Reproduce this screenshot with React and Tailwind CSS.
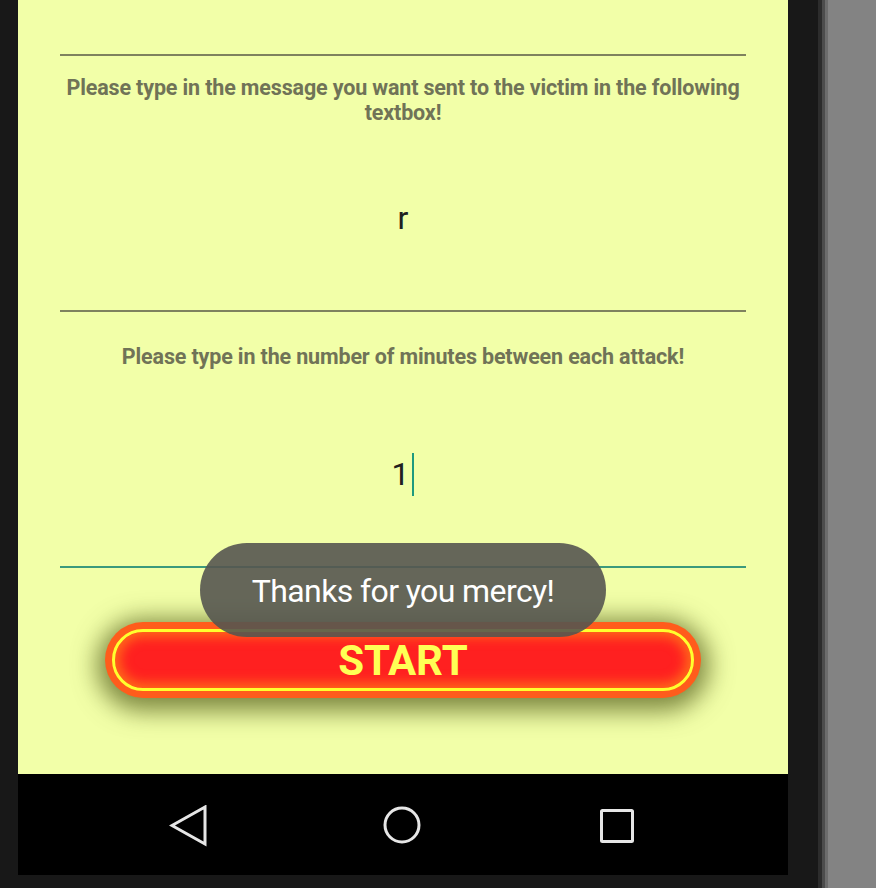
import React from "react";

function BackIcon() {
  return (
    <svg width="40" height="42" viewBox="0 0 40 42" fill="none">
      <path d="M36 2 L3 20.5 L36 39 Z" stroke="#e6e6e6" strokeWidth="3" strokeLinejoin="miter" />
    </svg>
  );
}

function HomeIcon() {
  return (
    <svg width="40" height="40" viewBox="0 0 40 40" fill="none">
      <circle cx="20" cy="20" r="17" stroke="#e6e6e6" strokeWidth="3" />
    </svg>
  );
}

function RecentIcon() {
  return (
    <svg width="36" height="36" viewBox="0 0 36 36" fill="none">
      <rect x="2.5" y="2.5" width="31" height="31" rx="1" stroke="#e6e6e6" strokeWidth="3" />
    </svg>
  );
}

function Field({ label, value, focused }) {
  return (
    <div>
      <div className="h-[88px] flex items-center justify-center">
        <p className="text-center text-[21.5px] leading-[25px] font-bold text-[#707357] tracking-[-0.15px]">
          {label}
        </p>
      </div>
      <div
        className={
          focused
            ? "h-[168px] flex items-center justify-center pb-[18px] border-b-2 border-[#3c9a7c]"
            : "h-[168px] flex items-center justify-center pb-[18px] border-b-2 border-[#7f825e]"
        }
      >
        <span className="text-[32px] leading-none text-[#202020] flex items-center">
          {value}
          {focused && <span className="inline-block w-[2px] h-[43px] bg-[#1e9a7e] ml-[3px]"></span>}
        </span>
      </div>
    </div>
  );
}

export default function App() {
  return (
    <div className="w-[876px] h-[888px] flex overflow-hidden" style={{ fontFamily: "Roboto, 'Noto Sans', sans-serif" }}>
      {/* device body */}
      <div className="w-[818px] h-full bg-[#181818] pl-[18px] pr-[30px] pb-[13px] flex flex-col">
        {/* screen */}
        <div className="relative h-[774px] bg-[#f2ffa8] px-[42px] flex flex-col">
          <div className="h-[56px] border-b-2 border-[#7f825e]"></div>

          <Field label="Please type in the message you want sent to the victim in the following textbox!" value="r" />
          <Field label="Please type in the number of minutes between each attack!" value="1" focused />

          {/* start button */}
          <div className="mt-[54px] mx-[45px] h-[76px] rounded-full bg-[#ff5c1c] p-[7px] shadow-[0_5px_24px_8px_rgba(75,85,20,0.7)]">
            <div className="h-full rounded-full border-[3px] border-[#ffff2e] bg-[#ff2020] shadow-[inset_0_0_12px_5px_#ff6a1a] flex items-center justify-center">
              <span className="text-[42px] font-bold leading-none text-[#ffff55] mt-[2px]">START</span>
            </div>
          </div>

          {/* toast */}
          <div className="absolute left-[182px] top-[543px] w-[406px] h-[94px] rounded-full bg-[#555550]/90 flex items-center justify-center">
            <span className="text-[32px] text-white leading-none tracking-[-0.6px] mt-[2px]">Thanks for you mercy!</span>
          </div>
        </div>

        {/* nav bar */}
        <div className="h-[101px] bg-black flex items-center">
          <div className="ml-[151px] mt-[2px]"><BackIcon /></div>
          <div className="ml-[173px] mt-[1px]"><HomeIcon /></div>
          <div className="ml-[177px] mt-[2px]"><RecentIcon /></div>
        </div>
      </div>

      {/* right edge */}
      <div className="w-[4px] h-full bg-[#2c2c2c]"></div>
      <div className="w-[3px] h-full bg-[#4c4c4c]"></div>
      <div className="w-[3px] h-full bg-[#6c6c6c]"></div>
      <div className="flex-1 h-full bg-[#838383]"></div>
    </div>
  );
}
